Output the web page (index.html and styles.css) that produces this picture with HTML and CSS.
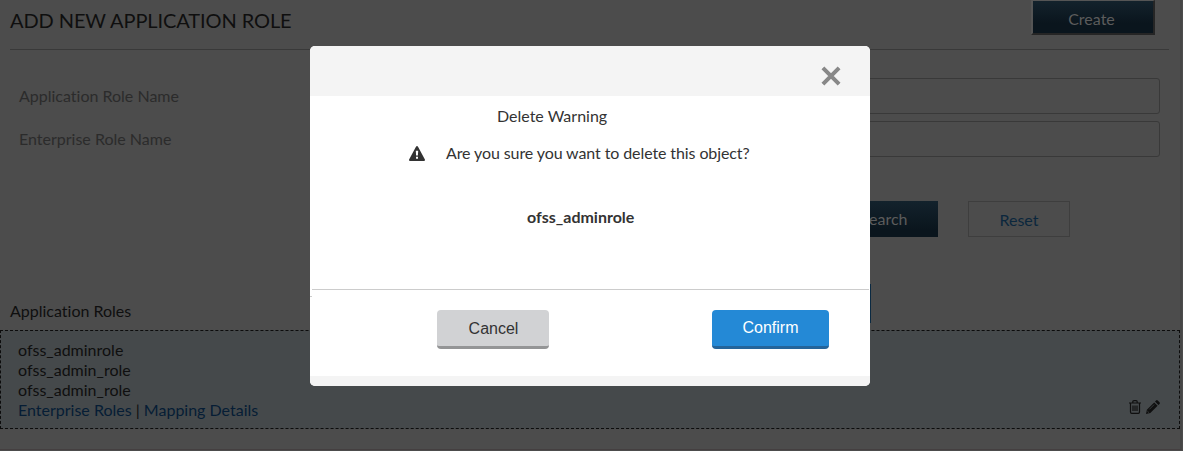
FILE: index.html
```html
<!DOCTYPE html>
<html lang="en">
<head>
<meta charset="utf-8">
<title>Application Roles</title>
<link rel="stylesheet" href="styles.css">
</head>
<body>
<main class="page">
  <header class="header">
    <h1 class="title">ADD NEW APPLICATION ROLE</h1>
    <button class="btn create">Create</button>
  </header>
  <section class="form">
    <div class="field"><label>Application Role Name</label><div class="input"></div></div>
    <div class="field"><label>Enterprise Role Name</label><div class="input"></div></div>
  </section>
  <div class="actions">
    <button class="btn search">Search</button>
    <button class="btn reset">Reset</button>
  </div>
  <div class="list-head"><h2 class="list-title">Application Roles</h2><div class="pager"></div></div>
  <section class="role">
    <div class="role-text">
      <div>ofss_adminrole</div>
      <div>ofss_admin_role</div>
      <div>ofss_admin_role</div>
      <div class="links"><a>Enterprise Roles</a> | <a>Mapping Details</a></div>
    </div>
    <div class="tools">
      <svg width="12" height="14" viewBox="0 0 12 14" fill="none" stroke="currentColor" stroke-width="1.2"><path d="M0 3h12M3.800 3V1.700Q3.800.6 5 .6h2q1.200 0 1.200 1.100V3M1.500 3v9q0 1.300 1.200 1.300h6.600q1.200 0 1.200-1.300V3M4 5.500v5.500M6 5.500v5.500M8 5.500v5.500"/></svg>
      <svg width="14" height="14" viewBox="0 0 14 14"><path fill="currentColor" d="M0 14l.9-4.300L8.200 2.400l3.400 3.400-7.300 7.300zM9 1.600L10.100.5q.8-.8 1.600 0l1.800 1.800q.8.800 0 1.600L12.400 5z"/><path d="M1.300 11l1.700 1.700M3.300 9.400l4.800-4.800" stroke="#45494b" stroke-width=".7"/></svg>
    </div>
  </section>
</main>
<div class="dialog" role="dialog">
  <div class="dialog-top">
    <svg class="close" width="20" height="20" viewBox="0 0 20 20"><path d="M1.900 1.900l16.200 16.200M18.100 1.900L1.900 18.100" stroke="#888" stroke-width="4" stroke-linecap="butt"/></svg>
  </div>
  <div class="dialog-body">
    <div class="dialog-title">Delete Warning</div>
    <div class="message">
      <svg width="16" height="15" viewBox="0 0 16 15"><path fill="#333" fill-rule="evenodd" d="M7.100.6q.9-1.200 1.800 0L15.900 13.400Q16.300 15 15 15H1Q-.3 15 .1 13.400zM6.800 4.800l.3 4.800h1.800l.3-4.800zM7 10.800v2h2v-2z"/></svg>
      <span>Are you sure you want to delete this object?</span>
    </div>
    <div class="object">ofss_adminrole</div>
  </div>
  <div class="dialog-actions">
    <button class="cancel">Cancel</button>
    <button class="confirm">Confirm</button>
  </div>
  <div class="dialog-foot"></div>
</div>
</body>
</html>
```

FILE: styles.css
```css
* { box-sizing: border-box; }
body { margin: 0; background: #4c4c4c; font: 16px/20px Lato, sans-serif; font-variant-ligatures: none; color: #0f0f0f; overflow: hidden; }
button { font: inherit; padding: 0; margin: 0; border: 0; border-radius: 0; }
h1, h2 { margin: 0; font-weight: 400; }
.page { width: 1182px; height: 450px; border-right: 2px solid #464646; border-bottom: 1px solid #443f40; }
.header { display: flex; justify-content: space-between; align-items: flex-start; height: 50px; margin: 0 11px 0 10px; border-bottom: 1px solid #393939; }
.title { font-size: 20px; line-height: 24px; padding-top: 8px; letter-spacing: -.09px; }
.btn { height: 36px; color: #5c5c5c; }
.create { width: 124px; height: 35px; margin-right: 14px; padding: 3px 3px 0 0; border: 2px solid #252525; border-top: 1px solid #555; border-left-color: #555; background: linear-gradient(#13222c, #0a151d 70%); }
.form { display: flex; flex-direction: column; gap: 7px; padding: 28px 20px 0 19px; color: #2b2b2b; }
.field { display: flex; align-items: center; height: 36px; }
.field label { width: 340px; }
.input { flex: 1; height: 36px; border: 1px solid #393939; border-radius: 3px; }
.actions { display: flex; justify-content: flex-end; gap: 30px; padding: 44px 110px 0 0; }
.search { width: 108px; background: linear-gradient(#13222c, #0a151d 80%); }
.reset { width: 102px; padding-top: 2px; color: #0b273d; background: #4c4c4c; border: 1px solid #3e3e3e; }
.list-head { display: flex; justify-content: space-between; height: 93px; padding: 47px 309px 0 10px; }
.list-title { font-size: 16px; line-height: 20px; padding-top: 17px; }
.pager { width: 40px; height: 39px; background: #0b2a42; }
.role { display: flex; justify-content: space-between; height: 99px; background: #45494b; border: 1px dashed #0c0c0c; padding: 9px 19px 0 17px; }
.role-text a { color: #061d35; }
.tools { display: flex; gap: 5px; padding-top: 60px; }
.dialog { position: absolute; left: 310px; top: 46px; width: 560px; height: 340px; display: flex; flex-direction: column; background: #fff; border-radius: 5px; overflow: hidden; color: #333; }
.dialog-top { height: 50px; background: #f4f4f4; display: flex; justify-content: flex-end; padding: 20px 29px 0 0; }
.dialog-body { height: 194px; margin: 0 1px 0 2px; border-bottom: 1px solid #ccc; padding-top: 10px; }
.dialog-title { padding-left: 185px; }
.message { display: flex; align-items: center; gap: 21px; padding: 17px 0 0 97px; letter-spacing: -.1px; }
.object { padding: 44px 0 0 215px; font-weight: 700; }
.dialog-actions { flex: 1; display: flex; gap: 163px; padding: 20px 0 0 127px; background: linear-gradient(#ccc, #ccc) 0 6px / 2px 1px no-repeat; }
.dialog-actions button { height: 39px; border-radius: 4px; font: 16px/36px "Liberation Sans", Arial, sans-serif; }
.dialog-actions .cancel { width: 112px; background: #d1d2d4; color: #333; border-bottom: 3px solid #949596; padding-left: 1px; line-height: 37px; }
.dialog-actions .confirm { width: 117px; background: #2489d6; color: #fff; border-bottom: 3px solid #24649a; }
.dialog-foot { height: 10px; background: #f4f4f4; }
```
